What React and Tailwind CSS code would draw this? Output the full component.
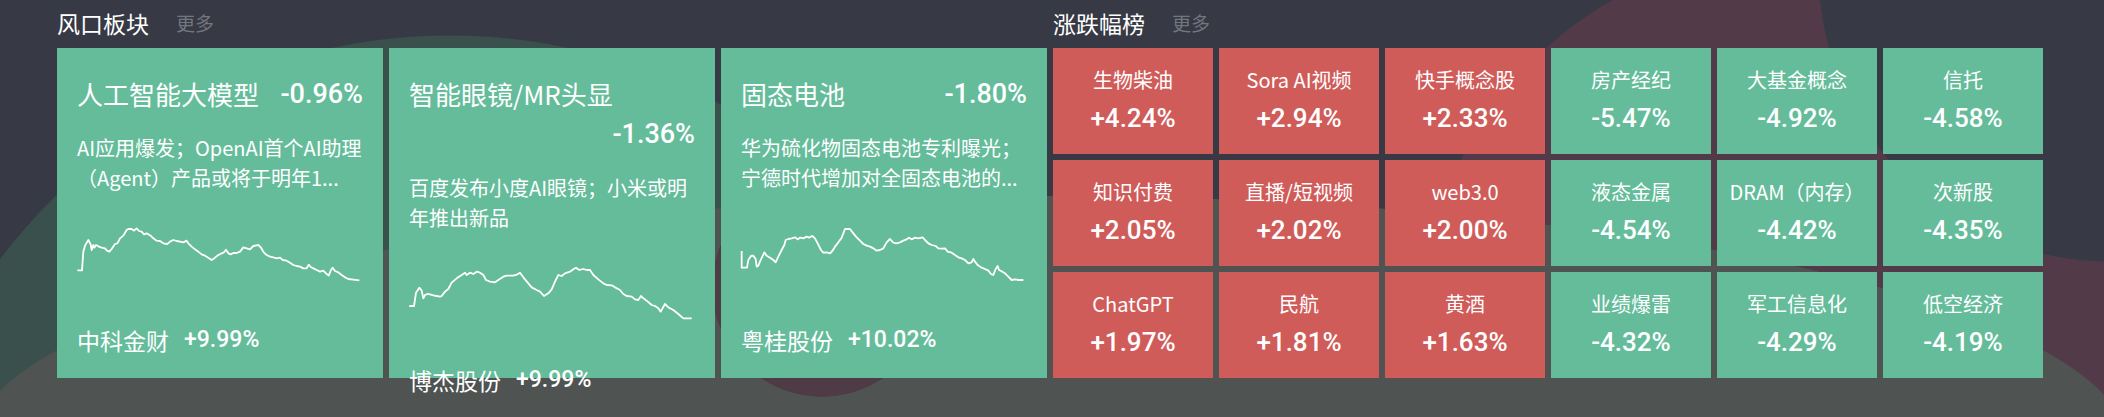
import React from "react";

const c1 = "52,196 66,196 70,140 75,122 85,105 92,118 95,135 100,120 103,128 108,120 115,124 125,128 135,130 140,136 148,140 155,132 165,117 172,115 180,100 190,92 200,75 205,72 215,72 222,77 230,70 237,78 245,80 252,88 260,85 265,88 272,92 280,100 290,107 300,108 310,115 322,117 330,110 340,105 350,108 360,110 370,112 380,107 385,115 395,125 405,133 415,140 425,148 435,152 445,158 455,165 465,158 475,150 485,145 492,142 498,134 505,145 512,148 520,144 530,144 540,140 550,127 560,130 570,133 580,123 595,120 603,128 612,143 620,150 630,155 640,157 650,160 660,158 668,165 680,167 690,173 700,180 710,183 720,185 730,190 740,190 746,179 752,186 760,190 770,195 780,200 790,197 798,205 806,212 813,195 818,188 825,198 835,202 845,210 855,217 865,222 880,224 898,226";

const c2 = "208,318 222,318 228,278 238,263 245,272 250,295 255,285 262,282 270,283 280,286 290,288 300,290 305,288 315,275 325,267 335,248 350,235 365,225 375,218 380,225 390,218 400,222 410,215 420,218 430,225 438,240 450,245 465,247 475,240 490,230 500,227 520,227 530,224 540,218 550,232 565,250 575,262 590,270 600,275 612,288 625,280 635,268 645,245 655,225 665,228 675,220 690,215 700,208 708,203 718,210 730,207 740,210 750,210 760,225 775,238 790,250 800,255 815,256 825,262 840,270 850,282 860,288 875,290 885,298 895,300 903,288 910,295 920,302 935,315 945,318 955,325 962,335 975,312 985,322 1000,330 1015,342 1030,355 1055,355";

const c3 = "50,138 50,188 66,188 70,165 78,153 85,152 92,162 95,185 100,182 107,165 112,155 118,142 125,152 135,158 145,165 152,172 160,155 170,135 178,120 182,105 190,102 200,100 210,97 218,103 225,98 235,100 245,95 252,98 262,93 270,100 278,115 288,135 295,143 305,142 315,145 322,138 330,125 340,112 350,98 355,85 360,72 375,72 385,85 395,97 405,107 415,117 425,122 435,125 445,130 455,137 465,135 475,130 485,112 495,102 505,113 515,115 525,112 535,107 545,103 552,98 560,103 570,98 580,100 593,97 600,105 610,115 620,120 632,123 640,130 650,131 660,130 668,140 680,143 690,150 700,157 710,160 720,165 730,175 740,172 745,162 750,170 758,180 770,188 780,192 790,197 798,207 805,210 812,192 818,183 822,195 832,200 840,205 850,215 860,225 870,223 880,225 895,225";

const cards = [
  {
    title: "人工智能大模型",
    pct: "-0.96%",
    wrap: false,
    lines: ["AI应用爆发；OpenAI首个AI助理", "（Agent）产品或将于明年1..."],
    pts: c1,
    tf: "translate(-17,12) scale(0.33333)",
    stock: "中科金财",
    spct: "+9.99%",
  },
  {
    title: "智能眼镜/MR头显",
    pct: "-1.36%",
    wrap: true,
    lines: ["百度发布小度AI眼镜；小米或明", "年推出新品"],
    pts: c2,
    tf: "translate(-69,-33) scale(0.33333)",
    stock: "博杰股份",
    spct: "+9.99%",
  },
  {
    title: "固态电池",
    pct: "-1.80%",
    wrap: false,
    lines: ["华为硫化物固态电池专利曝光；", "宁德时代增加对全固态电池的..."],
    pts: c3,
    tf: "translate(-16,12) scale(0.33333)",
    stock: "粤桂股份",
    spct: "+10.02%",
  },
];

const tiles = [
  ["生物柴油", "+4.24%", true],
  ["Sora AI视频", "+2.94%", true],
  ["快手概念股", "+2.33%", true],
  ["房产经纪", "-5.47%", false],
  ["大基金概念", "-4.92%", false],
  ["信托", "-4.58%", false],
  ["知识付费", "+2.05%", true],
  ["直播/短视频", "+2.02%", true],
  ["web3.0", "+2.00%", true],
  ["液态金属", "-4.54%", false],
  ["DRAM（内存）", "-4.42%", false],
  ["次新股", "-4.35%", false],
  ["ChatGPT", "+1.97%", true],
  ["民航", "+1.81%", true],
  ["黄酒", "+1.63%", true],
  ["业绩爆雷", "-4.32%", false],
  ["军工信息化", "-4.29%", false],
  ["低空经济", "-4.19%", false],
];

function Header({ title }) {
  return (
    <div className="h-[48px] flex items-center pb-[3px]">
      <span className="text-[23px] leading-[30px] text-white">{title}</span>
      <span className="ml-[27px] text-[19px] leading-[30px] text-[#74767f]">更多</span>
    </div>
  );
}

function Card({ c }) {
  return (
    <div className="h-[330px] bg-[#65bc9b] px-[20px] pt-[26px] text-white">
      {c.wrap ? (
        <div className="leading-[40px]">
          <div className="text-[26px] whitespace-nowrap">{c.title}</div>
          <div className="text-right text-[27px] font-medium font-['Roboto',sans-serif]">{c.pct}</div>
        </div>
      ) : (
        <div className="flex items-center justify-between leading-[40px]">
          <span className="text-[26px] whitespace-nowrap">{c.title}</span>
          <span className="text-[27px] font-medium font-['Roboto',sans-serif]">{c.pct}</span>
        </div>
      )}
      <div className="mt-[19px] text-[20px] leading-[30px] text-white">
        {c.lines.map((l, i) => (
          <div key={i} className="whitespace-nowrap">{l}</div>
        ))}
      </div>
      <div className="h-[127px]">
        <svg width="286" height="127" className="block overflow-visible">
          <g transform={c.tf}>
            <polyline
              points={c.pts}
              fill="none"
              stroke="#ffffff"
              strokeWidth="1.8"
              strokeLinejoin="round"
              vectorEffect="non-scaling-stroke"
            />
          </g>
        </svg>
      </div>
      <div className="flex items-center leading-[40px] whitespace-nowrap">
        <span className="text-[23px]">{c.stock}</span>
        <span className="ml-[15px] text-[23px] font-medium font-['Roboto',sans-serif]">{c.spct}</span>
      </div>
    </div>
  );
}

export default function App() {
  return (
    <div className="w-full h-[417px] overflow-hidden bg-[#373945] bg-[image:radial-gradient(circle_110px_at_822px_287px,#4e3b45_99.5%,transparent_100%),radial-gradient(circle_292px_at_2110px_-30px,#373945_99.7%,transparent_100%),radial-gradient(1080px_253px_at_1050px_449px,#4f5352_99.8%,transparent_100%),radial-gradient(circle_380px_at_1800px_330px,#523a48_99.7%,transparent_100%),radial-gradient(circle_565px_at_450px_600px,#3a504c_99.8%,transparent_100%)] font-['Noto_Sans_CJK_SC',sans-serif]">
      <div className="flex gap-[6px] pl-[57px]">
        <div className="w-[990px] shrink-0">
          <Header title="风口板块" />
          <div className="grid grid-cols-3 gap-[6px]">
            {cards.map((c, i) => (
              <Card key={i} c={c} />
            ))}
          </div>
        </div>
        <div className="w-[990px] shrink-0">
          <Header title="涨跌幅榜" />
          <div className="grid grid-cols-6 gap-[6px] auto-rows-[106px]">
            {tiles.map(([n, p, up], i) => (
              <div
                key={i}
                className={
                  "flex flex-col items-center pt-[17px] text-white " +
                  (up ? "bg-[#d05c5a]" : "bg-[#65bc9b]")
                }
              >
                <div className="text-[20px] leading-[30px] whitespace-nowrap">{n}</div>
                <div className="mt-[5px] text-[26px] leading-[36px] font-medium font-['Roboto',sans-serif]">{p}</div>
              </div>
            ))}
          </div>
        </div>
      </div>
    </div>
  );
}
